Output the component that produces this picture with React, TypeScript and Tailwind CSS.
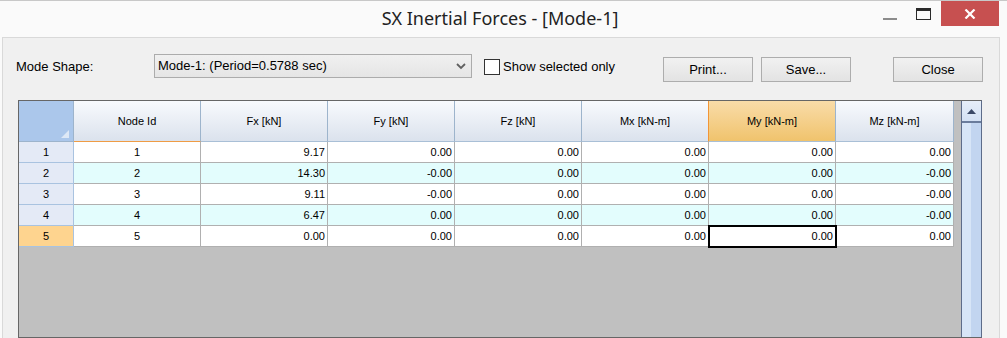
import React from "react";

const cols = [
  { label: "Node Id", w: "w-[127px]" },
  { label: "Fx [kN]", w: "w-[127px]" },
  { label: "Fy [kN]", w: "w-[127px]" },
  { label: "Fz [kN]", w: "w-[127px]" },
  { label: "Mx [kN-m]", w: "w-[127px]" },
  { label: "My [kN-m]", w: "w-[127px]" },
  { label: "Mz [kN-m]", w: "w-[118px]" },
];

const rows = [
  ["1", "9.17", "0.00", "0.00", "0.00", "0.00", "0.00"],
  ["2", "14.30", "-0.00", "0.00", "0.00", "0.00", "-0.00"],
  ["3", "9.11", "-0.00", "0.00", "0.00", "0.00", "-0.00"],
  ["4", "6.47", "0.00", "0.00", "0.00", "0.00", "-0.00"],
  ["5", "0.00", "0.00", "0.00", "0.00", "0.00", "0.00"],
];

function HeaderRow() {
  return (
    <div className="flex h-[41px] shrink-0">
      <div className="w-[55px] h-full bg-[#abc7eb] border-r border-b border-[#9db4cc] relative flex items-end justify-end">
        <svg width="10" height="10" viewBox="0 0 10 10" className="mr-[3px] mb-[2px]">
          <polygon points="9,1 9,9 1,9" fill="#dde8f6" />
        </svg>
      </div>
      {cols.map((c, i) => {
        const isMy = i === 5;
        const isNode = i === 0;
        const nextIsMy = i === 4;
        return (
          <div
            key={c.label}
            className={
              c.w +
              " h-full flex items-center justify-center text-[11px] text-black border-r border-b " +
              (isMy
                ? "bg-gradient-to-b from-[#f9dca8] to-[#f0c36c] border-r-[#9db4cc] border-b-[#a9bfd6]"
                : "bg-gradient-to-b from-[#f8fafd] to-[#dbe2ed] ") +
              (nextIsMy ? " border-r-[#f29536] border-b-[#a9bfd6]" : "") +
              (isNode ? " border-r-[#9db4cc] border-b-[#ef9c45]" : "") +
              (!isMy && !nextIsMy && !isNode ? " border-r-[#9db4cc] border-b-[#a9bfd6]" : "")
            }
          >
            {c.label}
          </div>
        );
      })}
    </div>
  );
}

function DataRow({ r, idx }: { r: string[]; idx: number }) {
  const alt = idx % 2 === 1;
  const cur = idx === 4;
  return (
    <div className="flex h-[21px] shrink-0">
      <div
        className={
          "w-[55px] h-full flex items-center justify-center text-[11px] border-r border-b border-r-[#a9c3e0] border-b-[#a9c3e0] " +
          (cur ? "bg-[#fed48f]" : "bg-[#e4eaf6]")
        }
      >
        {String(idx + 1)}
      </div>
      {r.map((v, j) => {
        const sel = cur && j === 5;
        return (
          <div
            key={j}
            className={
              cols[j].w +
              " h-full flex items-center text-[11px] text-black border-r border-b border-[#b0b0b0] " +
              (j === 0 ? "justify-center " : "justify-end pr-[2px] ") +
              (alt ? "bg-[#e3fdfd] " : "bg-white ") +
              (sel ? "relative z-10 outline-2 outline-solid outline-black -outline-offset-1" : "")
            }
          >
            {v}
          </div>
        );
      })}
    </div>
  );
}

function Button({ label, cls }: { label: string; cls: string }) {
  return (
    <div
      className={
        "w-[90px] h-[25px] mt-[19px] border border-[#adadad] bg-gradient-to-b from-[#f1f1f1] to-[#e3e3e3] flex items-center justify-center text-[13px] text-black " +
        cls
      }
    >
      {label}
    </div>
  );
}

export default function App() {
  return (
    <div className="w-[1007px] h-[338px] overflow-hidden bg-[#fafafa] border-t border-[#c8c8c8] flex flex-col font-['Liberation_Sans',Arial,sans-serif]">
      {/* Title bar */}
      <div className="h-[36px] shrink-0 grid grid-cols-[1fr_auto_1fr] w-[1000px]">
        <div />
        <div className="flex items-center justify-center pb-[1px] text-[18px] text-[#222] font-['Noto_Sans',sans-serif]">
          SX Inertial Forces - [Mode-1]
        </div>
        <div className="flex items-start justify-end pr-[1px]">
          <div className="w-[14px] h-[2px] mt-[17px] bg-[#8c8c8c]" />
          <div className="w-[15px] h-[12px] mt-[7px] ml-[19px] border border-[#2a2a2a] border-t-[3px]" />
          <div className="w-[58px] h-[25px] ml-[10px] bg-[#c75050] flex items-center justify-center">
            <svg width="12" height="10" viewBox="0 0 12 10">
              <path d="M1.5 0.5 L10.5 9.5 M10.5 0.5 L1.5 9.5" stroke="white" strokeWidth="2.2" />
            </svg>
          </div>
        </div>
      </div>

      {/* Client area */}
      <div className="ml-[2px] w-[998px] flex-1 bg-[#f0f0f0] border border-b-0 border-[#d9d9d9] flex flex-col">
        {/* Controls row */}
        <div className="h-[62px] shrink-0 flex items-start pl-[13px]">
          <div className="w-[138px] mt-[21px] text-[13px] leading-[16px] text-black">Mode Shape:</div>
          <div className="w-[318px] h-[24px] mt-[16px] border border-[#acacac] bg-gradient-to-b from-[#f0f0f0] to-[#e5e5e5] flex items-center pl-[3px] pr-[5px] text-[13px] text-black">
            <span className="flex-1">Mode-1: (Period=0.5788 sec)</span>
            <svg width="10" height="7" viewBox="0 0 10 7">
              <path d="M1 1 L5 5 L9 1" stroke="#606060" strokeWidth="1.8" fill="none" />
            </svg>
          </div>
          <div className="w-[179px] ml-[12px] mt-[21px] flex items-center">
            <div className="w-[16px] h-[16px] border border-[#333] bg-white" />
            <span className="ml-[3px] text-[13px] leading-[16px] text-black">Show selected only</span>
          </div>
          <Button label="Print..." cls="" />
          <Button label="Save..." cls="ml-[8px]" />
          <Button label="Close" cls="ml-[42px]" />
        </div>

        {/* Grid */}
        <div className="ml-[15px] w-[964px] flex-1 border border-[#666] border-r-[#5d6c8a] flex">
          <div className="flex-1 bg-[#c0c0c0] flex flex-col">
            <HeaderRow />
            {rows.map((r, i) => (
              <DataRow key={i} r={r} idx={i} />
            ))}
          </div>
          <div className="w-[20px] border-l border-[#5d6c8a] flex flex-col">
            <div className="h-[20px] bg-gradient-to-b from-[#e6eef9] to-[#d4e1f4] flex items-center justify-center">
              <svg width="9" height="5" viewBox="0 0 9 5">
                <polygon points="4.5,0 9,5 0,5" fill="#3a4866" />
              </svg>
            </div>
            <div className="h-[2px] bg-[#6a7c9c]" />
            <div className="flex-1 flex">
              <div className="w-[9px] bg-[#d7e5f7]" />
              <div className="flex-1 bg-[#c2d5f0]" />
            </div>
          </div>
        </div>
      </div>
    </div>
  );
}
